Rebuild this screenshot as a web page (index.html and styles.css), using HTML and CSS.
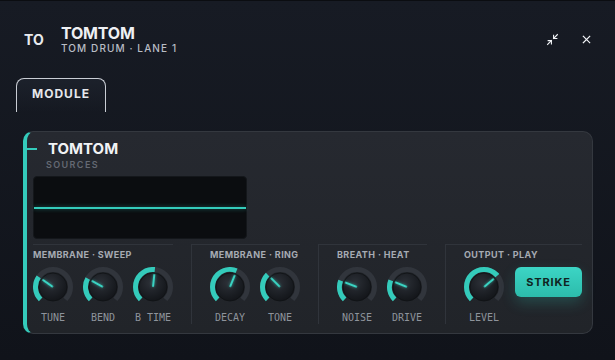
FILE: index.html
```html
<!DOCTYPE html>
<html lang="en">
<head>
    <meta charset="UTF-8">
    <title>TomTom</title>
    <link rel="stylesheet" href="styles.css">
</head>
<body>
<svg class="defs" width="0" height="0">
    <defs>
        <radialGradient id="diskGrad" cx="42%" cy="35%" r="70%">
            <stop offset="0" stop-color="#2c3037"/>
            <stop offset="0.7" stop-color="#191c21"/>
            <stop offset="1" stop-color="#121418"/>
        </radialGradient>
    </defs>
</svg>

<header class="top">
    <div class="badge">TO</div>
    <div class="titles">
        <div class="title">TOMTOM</div>
        <div class="subtitle">TOM DRUM · LANE 1</div>
    </div>
    <div class="actions">
        <button class="icon-btn" aria-label="collapse">
            <svg viewBox="0 0 24 24" width="13" height="13"><polyline points="4 14 10 14 10 20"/><polyline points="20 10 14 10 14 4"/><line x1="14" y1="10" x2="21" y2="3"/><line x1="3" y1="21" x2="10" y2="14"/></svg>
        </button>
        <button class="icon-btn" aria-label="close">
            <svg viewBox="0 0 24 24" width="13" height="13"><path d="M18 6 6 18M6 6l12 12"/></svg>
        </button>
    </div>
</header>

<div class="tabs">
    <div class="tab">MODULE</div>
</div>

<section class="panel">
    <h2 class="panel-title">TOMTOM</h2>
    <div class="panel-sub">SOURCES</div>
    <div class="scope"><div class="trace"></div></div>

    <div class="groups">
        <div class="group">
            <div class="group-title">MEMBRANE · SWEEP</div>
            <div class="row">
                <div class="knob">
                    <svg viewBox="0 0 40 40" width="40" height="40">
                        <circle class="track" cx="20" cy="20" r="17.5" pathLength="360" stroke-dasharray="270 90" transform="rotate(135 20 20)"/>
                        <circle class="fill" cx="20" cy="20" r="17.5" pathLength="360" stroke-dasharray="80 360" transform="rotate(135 20 20)"/>
                        <circle class="disk" cx="20" cy="20" r="14"/>
                        <line class="needle" x1="20" y1="19" x2="20" y2="8" transform="rotate(-55 20 20)"/>
                    </svg>
                    <span>TUNE</span>
                </div>
                <div class="knob">
                    <svg viewBox="0 0 40 40" width="40" height="40">
                        <circle class="track" cx="20" cy="20" r="17.5" pathLength="360" stroke-dasharray="270 90" transform="rotate(135 20 20)"/>
                        <circle class="fill" cx="20" cy="20" r="17.5" pathLength="360" stroke-dasharray="74 360" transform="rotate(135 20 20)"/>
                        <circle class="disk" cx="20" cy="20" r="14"/>
                        <line class="needle" x1="20" y1="19" x2="20" y2="8" transform="rotate(-61 20 20)"/>
                    </svg>
                    <span>BEND</span>
                </div>
                <div class="knob">
                    <svg viewBox="0 0 40 40" width="40" height="40">
                        <circle class="track" cx="20" cy="20" r="17.5" pathLength="360" stroke-dasharray="270 90" transform="rotate(135 20 20)"/>
                        <circle class="fill" cx="20" cy="20" r="17.5" pathLength="360" stroke-dasharray="141 360" transform="rotate(135 20 20)"/>
                        <circle class="disk" cx="20" cy="20" r="14"/>
                        <line class="needle" x1="20" y1="19" x2="20" y2="8" transform="rotate(6 20 20)"/>
                    </svg>
                    <span>B TIME</span>
                </div>
            </div>
        </div>

        <div class="group">
            <div class="group-title">MEMBRANE · RING</div>
            <div class="row">
                <div class="knob">
                    <svg viewBox="0 0 40 40" width="40" height="40">
                        <circle class="track" cx="20" cy="20" r="17.5" pathLength="360" stroke-dasharray="270 90" transform="rotate(135 20 20)"/>
                        <circle class="fill" cx="20" cy="20" r="17.5" pathLength="360" stroke-dasharray="157 360" transform="rotate(135 20 20)"/>
                        <circle class="disk" cx="20" cy="20" r="14"/>
                        <line class="needle" x1="20" y1="19" x2="20" y2="8" transform="rotate(22 20 20)"/>
                    </svg>
                    <span>DECAY</span>
                </div>
                <div class="knob">
                    <svg viewBox="0 0 40 40" width="40" height="40">
                        <circle class="track" cx="20" cy="20" r="17.5" pathLength="360" stroke-dasharray="270 90" transform="rotate(135 20 20)"/>
                        <circle class="fill" cx="20" cy="20" r="17.5" pathLength="360" stroke-dasharray="90 360" transform="rotate(135 20 20)"/>
                        <circle class="disk" cx="20" cy="20" r="14"/>
                        <line class="needle" x1="20" y1="19" x2="20" y2="8" transform="rotate(-45 20 20)"/>
                    </svg>
                    <span>TONE</span>
                </div>
            </div>
        </div>

        <div class="group">
            <div class="group-title">BREATH · HEAT</div>
            <div class="row">
                <div class="knob">
                    <svg viewBox="0 0 40 40" width="40" height="40">
                        <circle class="track" cx="20" cy="20" r="17.5" pathLength="360" stroke-dasharray="270 90" transform="rotate(135 20 20)"/>
                        <circle class="fill" cx="20" cy="20" r="17.5" pathLength="360" stroke-dasharray="66 360" transform="rotate(135 20 20)"/>
                        <circle class="disk" cx="20" cy="20" r="14"/>
                        <line class="needle" x1="20" y1="19" x2="20" y2="8" transform="rotate(-69 20 20)"/>
                    </svg>
                    <span>NOISE</span>
                </div>
                <div class="knob">
                    <svg viewBox="0 0 40 40" width="40" height="40">
                        <circle class="track" cx="20" cy="20" r="17.5" pathLength="360" stroke-dasharray="270 90" transform="rotate(135 20 20)"/>
                        <circle class="fill" cx="20" cy="20" r="17.5" pathLength="360" stroke-dasharray="67 360" transform="rotate(135 20 20)"/>
                        <circle class="disk" cx="20" cy="20" r="14"/>
                        <line class="needle" x1="20" y1="19" x2="20" y2="8" transform="rotate(-68 20 20)"/>
                    </svg>
                    <span>DRIVE</span>
                </div>
            </div>
        </div>

        <div class="group">
            <div class="group-title">OUTPUT · PLAY</div>
            <div class="row">
                <div class="knob">
                    <svg viewBox="0 0 40 40" width="40" height="40">
                        <circle class="track" cx="20" cy="20" r="17.5" pathLength="360" stroke-dasharray="270 90" transform="rotate(135 20 20)"/>
                        <circle class="fill" cx="20" cy="20" r="17.5" pathLength="360" stroke-dasharray="185 360" transform="rotate(135 20 20)"/>
                        <circle class="disk" cx="20" cy="20" r="14"/>
                        <line class="needle" x1="20" y1="19" x2="20" y2="8" transform="rotate(50 20 20)"/>
                    </svg>
                    <span>LEVEL</span>
                </div>
                <button class="strike">STRIKE</button>
            </div>
        </div>
    </div>
</section>
</body>
</html>
```

FILE: styles.css
```css
* {
    margin: 0;
    padding: 0;
    box-sizing: border-box;
}

body {
    width: 615px;
    height: 360px;
    overflow: hidden;
    background: linear-gradient(#171b24, #10131a);
    border-top: 1px solid #0b0d11;
    font-family: Inter, "Noto Sans", sans-serif;
    color: #eef0f3;
}

.defs {
    position: absolute;
}

/* header */
.top {
    display: flex;
    align-items: center;
    padding: 24px 17px 0 24px;
}

.badge {
    width: 37px;
    font-size: 14px;
    font-weight: 700;
    color: #e8eaee;
}

.title {
    font-size: 16px;
    line-height: 17px;
    font-weight: 700;
    letter-spacing: -0.2px;
}

.subtitle {
    font-size: 10px;
    line-height: 12px;
    font-weight: 500;
    letter-spacing: 1.1px;
    color: #b9bdc5;
}

.actions {
    margin-left: auto;
    display: flex;
    gap: 10px;
}

.icon-btn {
    width: 24px;
    height: 24px;
    display: flex;
    align-items: center;
    justify-content: center;
    background: none;
    border: 0;
}

.icon-btn svg {
    fill: none;
    stroke: #f2f4f7;
    stroke-width: 2;
    stroke-linecap: square;
}

/* tabs */
.tabs {
    display: flex;
    padding-left: 16px;
    margin-top: 24px;
}

.tab {
    width: 90px;
    height: 34px;
    padding: 8px 0 0 15px;
    border: 1px solid #c9cdd4;
    border-bottom: 0;
    border-radius: 8px 8px 0 0;
    background: linear-gradient(#1c212b, rgba(23, 27, 36, 0));
    font-size: 12px;
    line-height: 14px;
    font-weight: 700;
    letter-spacing: 1px;
    color: #e6e8ec;
}

/* panel */
.panel {
    position: relative;
    width: 570px;
    margin: 19px 0 0 23px;
    padding: 8px 11px 9px 6px;
    background: linear-gradient(#262930, #212429);
    border: 1px solid #34383f;
    border-left: 4px solid #34cbbb;
    border-radius: 10px;
}

.panel-title {
    position: relative;
    padding-left: 15px;
    font-size: 15px;
    line-height: 18px;
    font-weight: 700;
    color: #f1f3f5;
}

.panel-title::before {
    content: "";
    position: absolute;
    left: -6px;
    top: 8px;
    width: 10px;
    height: 2px;
    background: #34cbbb;
}

.panel-sub {
    margin-top: 1px;
    padding-left: 13px;
    font-size: 9px;
    line-height: 12px;
    font-weight: 600;
    letter-spacing: 1.4px;
    color: #646973;
}

.scope {
    width: 214px;
    height: 63px;
    margin-top: 5px;
    display: flex;
    align-items: center;
    background: #0b0d10;
    border: 1px solid #14171b;
    border-radius: 4px;
}

.trace {
    width: 100%;
    height: 2px;
    background: #34cbbb;
    box-shadow: 0 0 4px rgba(52, 203, 187, 0.45);
}

/* control groups */
.groups {
    display: flex;
    gap: 18px;
    margin-top: 5px;
}

.group {
    padding-top: 4px;
    border-top: 1px solid #30343b;
}

.group + .group {
    padding-left: 18px;
    border-left: 1px solid #30343b;
}

.group-title {
    font-size: 9px;
    line-height: 12px;
    font-weight: 700;
    letter-spacing: 0.4px;
    color: #a6abb3;
    white-space: nowrap;
}

.row {
    display: flex;
    align-items: flex-start;
    gap: 10px;
    margin-top: 6px;
}

.knob {
    width: 40px;
    display: flex;
    flex-direction: column;
    align-items: center;
}

.knob svg {
    display: block;
}

.knob .track {
    fill: none;
    stroke: #31353c;
    stroke-width: 5;
}

.knob .fill {
    fill: none;
    stroke: #34cbbb;
    stroke-width: 5;
}

.knob .disk {
    fill: url(#diskGrad);
    stroke: #0f1114;
    stroke-width: 0.8;
}

.knob .needle {
    stroke: #3ad3c2;
    stroke-width: 2;
    stroke-linecap: round;
    filter: drop-shadow(0 0 1.5px rgba(52, 203, 187, 0.7));
}

.knob span {
    margin-top: 5px;
    font-family: "DejaVu Sans Mono", "Liberation Mono", monospace;
    font-size: 10px;
    line-height: 12px;
    color: #8e939b;
    white-space: nowrap;
}

.strike {
    width: 67px;
    height: 30px;
    margin-left: 1px;
    border: 0;
    border-radius: 6px;
    background: linear-gradient(#3cd5c5, #2cbcab);
    box-shadow: 0 6px 14px rgba(52, 203, 187, 0.22);
    font-family: Inter, "Noto Sans", sans-serif;
    font-size: 11px;
    font-weight: 700;
    letter-spacing: 0.8px;
    color: #102421;
}
```
